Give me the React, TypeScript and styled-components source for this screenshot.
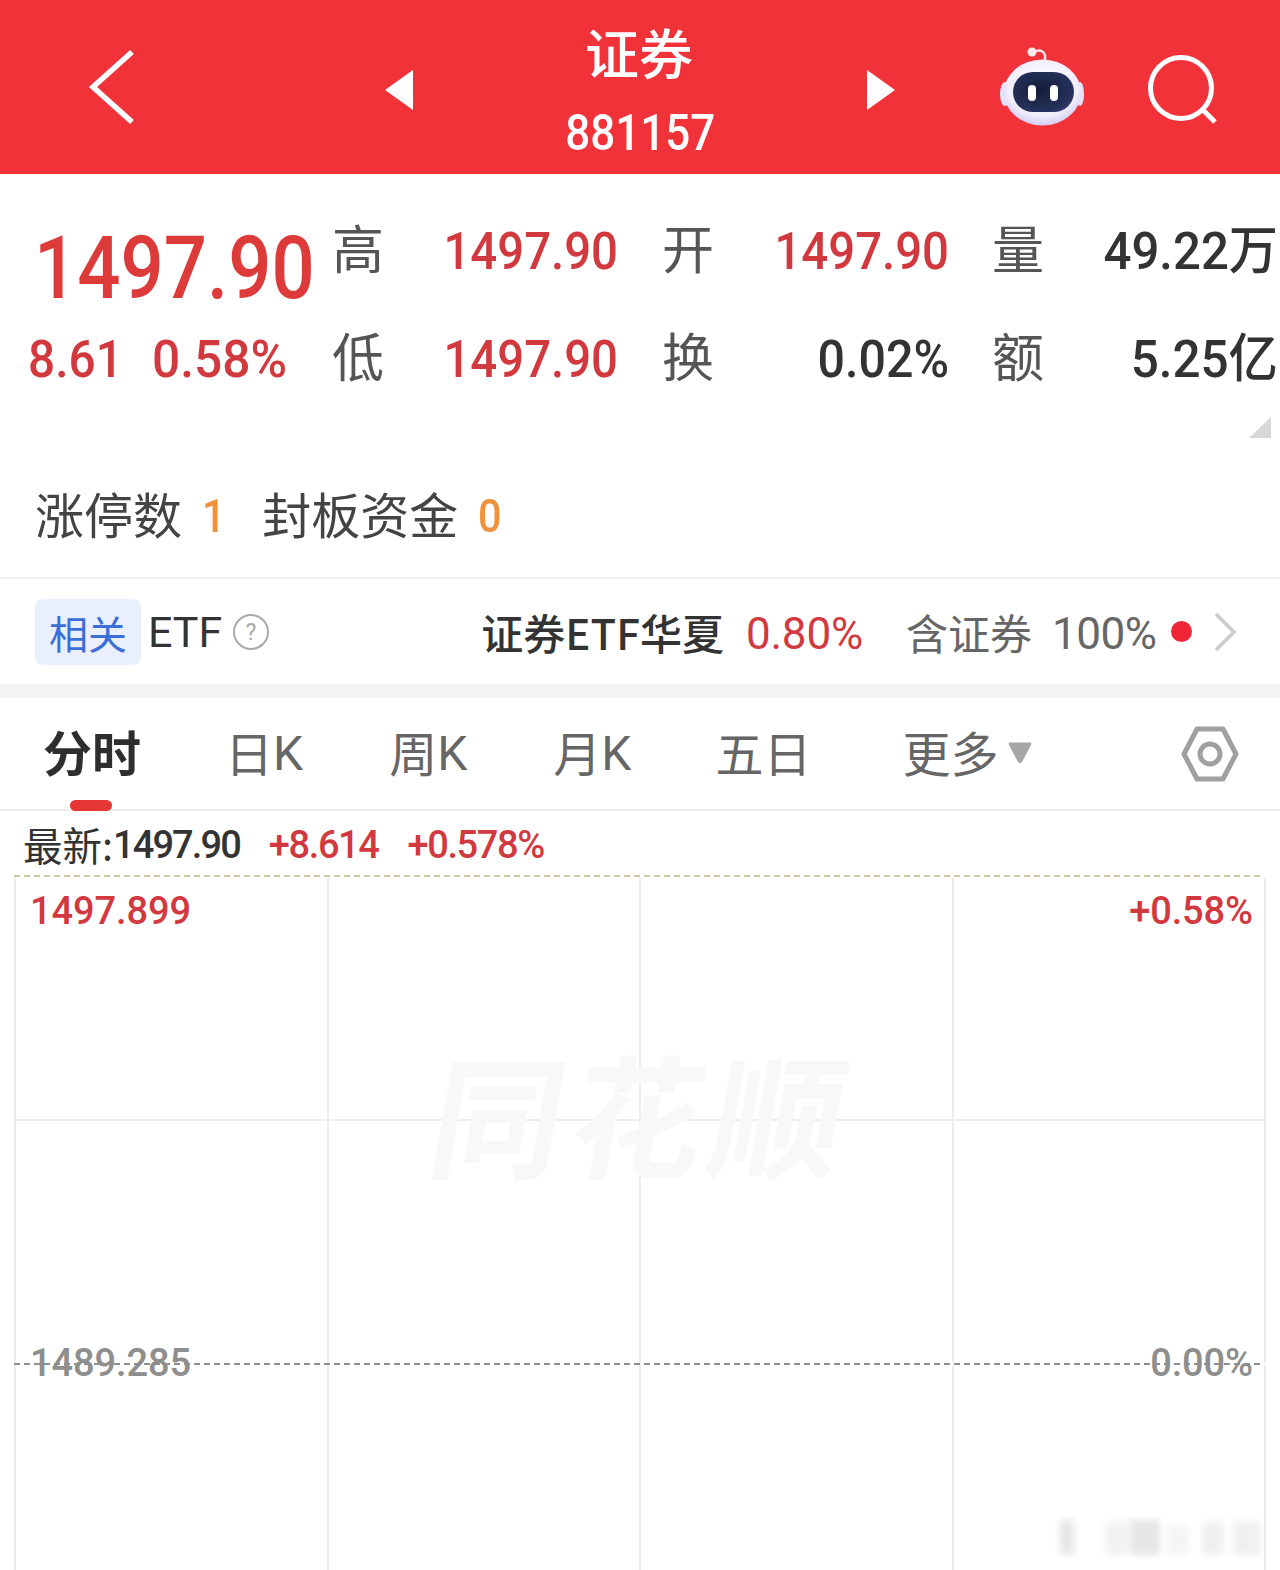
import * as React from 'react'
import styled, { createGlobalStyle } from 'styled-components'

const RED = '#d2393f';
const NUM_FONT = '"Roboto", "Noto Sans CJK SC", sans-serif';

const GlobalStyle = createGlobalStyle`
  html, body {
    margin: 0;
    padding: 0;
    background: #fff;
    font-family: "Noto Sans CJK SC", "Noto Sans", sans-serif;
  }
  * { box-sizing: border-box; }
`;

const Page = styled.div`
  position: relative;
  width: 1280px;
  height: 1570px;
  overflow: hidden;
  background: #fff;
  display: flex;
  flex-direction: column;
`;

const Header = styled.header`
  height: 174px;
  flex: none;
  background: #f13239;
  display: flex;
  align-items: center;
  padding-left: 88px;
`;

const TitleBlock = styled.div`
  width: 454px;
  padding-top: 15px;
  display: flex;
  flex-direction: column;
  align-items: center;
  color: #fff;
`;

const Title = styled.div`
  font-size: 54px;
  line-height: 62px;
  font-weight: 500;
  margin-top: -8px;
  margin-right: 2px;
`;

const Code = styled.div`
  font-family: ${NUM_FONT};
  font-size: 50px;
  line-height: 54px;
  font-weight: 500;
  margin-top: 23px;
  transform: scaleX(0.88);
`;

const HeaderIcon = styled.svg<{ $ml?: number; $mt?: number }>`
  flex: none;
  display: block;
  margin-left: ${(p) => p.$ml || 0}px;
  margin-top: ${(p) => p.$mt || 0}px;
`;

const Quote = styled.section`
  height: 405px;
  flex: none;
  position: relative;
  border-bottom: 2px solid #f0f0f0;
  padding-top: 21px;
`;

const QuoteGrid = styled.div`
  display: grid;
  grid-template-columns: 332px 50px 236px 44px 50px 237px 43px 50px 236px;
  grid-auto-rows: 108px;
  align-items: center;
`;

const BigPrice = styled.div`
  font-family: ${NUM_FONT};
  font-size: 87px;
  line-height: 108px;
  font-weight: 500;
  color: #dd3a3a;
  margin-left: 34px;
  white-space: nowrap;
  margin-top: 38px;
  transform: scaleX(0.875);
  transform-origin: left center;
`;

const ChangeRow = styled.div`
  display: flex;
  gap: 21px;
  padding-left: 28px;
  padding-top: 4px;
`;

const Change = styled.span<{ $sx: number }>`
  font-family: ${NUM_FONT};
  font-size: 52px;
  font-weight: 500;
  color: ${RED};
  display: inline-block;
  transform: scaleX(${(p) => p.$sx});
  transform-origin: left center;
`;

const Label = styled.div`
  font-size: 52px;
  line-height: 60px;
  color: #555;
  margin-top: -4px;
`;

const Value = styled.div<{ $dark?: boolean; $sx?: number }>`
  font-family: ${NUM_FONT};
  font-size: 52px;
  line-height: 60px;
  font-weight: 500;
  margin-top: 5px;
  text-align: right;
  white-space: nowrap;
  color: ${(p) => (p.$dark ? '#333' : RED)};
  transform: scaleX(${(p) => p.$sx || 0.91});
  transform-origin: right center;
`;

const CornerMark = styled.div`
  position: absolute;
  right: 9px;
  top: 243px;
  width: 0;
  height: 0;
  border-style: solid;
  border-width: 0 0 21px 22px;
  border-color: transparent transparent #d8d8d8 transparent;
`;

const LimitRow = styled.div`
  display: flex;
  align-items: center;
  padding-left: 35px;
  margin-top: 71px;
  height: 60px;
  font-size: 49px;
  color: #444;
`;

const LimitValue = styled.span<{ $ml: number; $mr: number }>`
  font-family: ${NUM_FONT};
  font-size: 46px;
  font-weight: 500;
  color: #f0923a;
  margin-top: 7px;
  margin-left: ${(p) => p.$ml}px;
  margin-right: ${(p) => p.$mr}px;
  transform: scaleX(0.9);
  transform-origin: left center;
`;

const EtfRow = styled.section`
  height: 105px;
  flex: none;
  display: flex;
  align-items: center;
  padding-left: 35px;
`;

const EtfBadge = styled.div`
  width: 106px;
  height: 66px;
  border-radius: 8px;
  background: #e9effc;
  color: #3b6ed8;
  font-size: 39px;
  display: flex;
  align-items: center;
  justify-content: center;
`;

const EtfName = styled.span`
  font-family: ${NUM_FONT};
  font-size: 43px;
  color: #333;
  margin-left: 7px;
`;

const HelpIcon = styled.svg`
  margin-left: 11px;
  flex: none;
`;

const FundName = styled.span`
  font-size: 42px;
  font-weight: 500;
  color: #333;
  margin-left: 212px;
  white-space: nowrap;
`;

const FundRate = styled.span`
  font-family: ${NUM_FONT};
  font-size: 44px;
  color: ${RED};
  margin-left: 22px;
  margin-top: 4px;
  letter-spacing: -0.2px;
`;

const HoldLabel = styled.span`
  font-size: 42px;
  color: #666;
  margin-left: 43px;
`;

const HoldValue = styled.span`
  font-family: ${NUM_FONT};
  font-size: 44px;
  color: #666;
  margin-left: 20px;
  margin-top: 4px;
  letter-spacing: -0.5px;
`;

const Dot = styled.span`
  width: 21px;
  height: 21px;
  border-radius: 50%;
  background: #f02535;
  margin-left: 15px;
  flex: none;
`;

const Band = styled.div`
  height: 14px;
  flex: none;
  background: #f5f5f5;
`;

const Tabs = styled.nav`
  height: 113px;
  flex: none;
  display: flex;
  align-items: center;
  border-bottom: 2px solid #ececec;
  padding-left: 43px;
  padding-bottom: 6px;
`;

const Tab = styled.div<{ $active?: boolean; $ml?: number }>`
  position: relative;
  height: 100%;
  display: flex;
  align-items: center;
  margin-left: ${(p) => p.$ml || 0}px;
  font-size: ${(p) => (p.$active ? 49 : 48)}px;
  font-weight: ${(p) => (p.$active ? 700 : 400)};
  color: ${(p) => (p.$active ? '#2e2e2e' : '#666')};
  white-space: nowrap;
`;

const TabLatin = styled.span`
  font-family: ${NUM_FONT};
  font-size: 48px;
  margin-top: 6px;
`;

const TabMark = styled.span`
  position: absolute;
  left: 27px;
  bottom: -8px;
  width: 42px;
  height: 11px;
  border-radius: 6px;
  background: #e53535;
`;

const MoreArrow = styled.svg`
  margin-left: 10px;
  margin-top: 4px;
  flex: none;
`;

const SettingIcon = styled.svg`
  margin-left: 149px;
  margin-top: 6px;
  flex: none;
`;

const InfoRow = styled.div`
  height: 64px;
  flex: none;
  display: flex;
  align-items: center;
  padding-left: 23px;
  font-size: 39.5px;
  color: #333;
`;

const InfoNumber = styled.span<{ $up?: boolean }>`
  font-family: ${NUM_FONT};
  font-weight: 500;
  font-size: 38px;
  margin-top: 4px;
  letter-spacing: ${(p) => (p.$up ? -1.4 : -1.9)}px;
  color: ${(p) => (p.$up ? RED : '#333')};
  margin-left: ${(p) => (p.$up ? 29 : 0)}px;
`;

const Chart = styled.div`
  position: relative;
  flex: 1;
  margin: 0 14px;
  display: flex;
  flex-direction: column;
`;

const DashLine = styled.div<{ $color: string }>`
  height: 2px;
  flex: none;
  margin-right: 2px;
  background: repeating-linear-gradient(90deg, ${(p) => p.$color} 0 6px, transparent 6px 10px);
`;

const ChartRow = styled.div<{ $h?: number }>`
  display: grid;
  grid-template-columns: repeat(4, 1fr);
  ${(p) => (p.$h ? `height: ${p.$h}px; flex: none;` : 'flex: 1;')}
  border-right: 2px solid #ededed;
`;

const ChartCell = styled.div`
  border-left: 2px solid #ededed;
`;

const SolidLine = styled.div`
  height: 2px;
  flex: none;
  background: #ededed;
`;

const AxisLabel = styled.span<{ $side: 'left' | 'right'; $top: number; $up?: boolean }>`
  position: absolute;
  ${(p) => p.$side}: ${(p) => (p.$side === 'left' ? 16 : 13)}px;
  top: ${(p) => p.$top}px;
  font-family: ${NUM_FONT};
  font-weight: 500;
  font-size: 38px;
  line-height: 46px;
  letter-spacing: -0.1px;
  color: ${(p) => (p.$up ? '#d2393f' : '#8e8e8e')};
`;

const Watermark = styled.div`
  position: absolute;
  left: 420px;
  top: 161px;
  font-size: 132px;
  line-height: 150px;
  font-weight: 700;
  color: #f8f8f8;
  letter-spacing: 8px;
  transform: skewX(-10deg);
  white-space: nowrap;
  pointer-events: none;
`;

const CornerSmudge = styled.svg`
  position: absolute;
  right: 15px;
  bottom: 0;
`;

const RobotIcon = () => (
  <HeaderIcon $ml={105} width="84" height="84" viewBox="0 0 84 84">
    <defs>
      <radialGradient id="shell" cx="50%" cy="40%" r="65%">
        <stop offset="0%" stopColor="#ffffff" />
        <stop offset="70%" stopColor="#f1eefc" />
        <stop offset="100%" stopColor="#c9c2f0" />
      </radialGradient>
      <radialGradient id="visor" cx="45%" cy="45%" r="65%">
        <stop offset="0%" stopColor="#141d38" />
        <stop offset="80%" stopColor="#25315a" />
        <stop offset="100%" stopColor="#3d3f80" />
      </radialGradient>
    </defs>
    <path d="M34 7 C42 3 46 8 45 15" fill="none" stroke="#f6e6ea" strokeWidth="2.5" />
    <circle cx="32" cy="7" r="4.5" fill="#f8e8ea" />
    <ellipse cx="5" cy="49" rx="5" ry="12" fill="#e6e1f8" />
    <ellipse cx="80" cy="49" rx="4" ry="12" fill="#e6e1f8" />
    <ellipse cx="42.5" cy="47.5" rx="38.5" ry="33" fill="url(#shell)" />
    <rect x="13" y="27" width="61" height="40" rx="20" fill="url(#visor)" />
    <rect x="28" y="40" width="8" height="16" rx="4" fill="#fff" />
    <rect x="50" y="40" width="8" height="16" rx="4" fill="#fff" />
  </HeaderIcon>
);

const App: React.FC = () => {
  return (
    <Page>
      <GlobalStyle />
      <Header>
        <HeaderIcon width="48" height="76" viewBox="0 0 48 76">
          <path d="M44 3 L5 38 L44 73" fill="none" stroke="#fff" strokeWidth="5.5" />
        </HeaderIcon>
        <HeaderIcon $ml={249} $mt={6} width="28" height="40" viewBox="0 0 28 40">
          <polygon points="28,0 28,40 0,20" fill="#fff" />
        </HeaderIcon>
        <TitleBlock>
          <Title>证券</Title>
          <Code>881157</Code>
        </TitleBlock>
        <HeaderIcon $mt={6} width="28" height="40" viewBox="0 0 28 40">
          <polygon points="0,0 0,40 28,20" fill="#fff" />
        </HeaderIcon>
        <RobotIcon />
        <HeaderIcon $ml={62} $mt={5} width="72" height="72" viewBox="0 0 72 72">
          <circle cx="35" cy="34" r="30.5" fill="none" stroke="#fff" strokeWidth="5" />
          <path d="M57 56 L69 68" stroke="#fff" strokeWidth="5" />
        </HeaderIcon>
      </Header>

      <Quote>
        <QuoteGrid>
          <BigPrice>1497.90</BigPrice>
          <Label>高</Label>
          <Value>1497.90</Value>
          <span />
          <Label>开</Label>
          <Value>1497.90</Value>
          <span />
          <Label>量</Label>
          <Value $dark $sx={0.945}>49.22万</Value>
          <ChangeRow>
            <Change $sx={0.92}>8.61</Change>
            <Change $sx={0.955}>0.58%</Change>
          </ChangeRow>
          <Label>低</Label>
          <Value>1497.90</Value>
          <span />
          <Label>换</Label>
          <Value $dark $sx={0.93}>0.02%</Value>
          <span />
          <Label>额</Label>
          <Value $dark $sx={0.95}>5.25亿</Value>
        </QuoteGrid>
        <CornerMark />
        <LimitRow>
          涨停数
          <LimitValue $ml={20} $mr={34}>1</LimitValue>
          封板资金
          <LimitValue $ml={20} $mr={0}>0</LimitValue>
        </LimitRow>
      </Quote>

      <EtfRow>
        <EtfBadge>相关</EtfBadge>
        <EtfName>ETF</EtfName>
        <HelpIcon width="36" height="36" viewBox="0 0 36 36">
          <circle cx="18" cy="18" r="17" fill="none" stroke="#aaa" strokeWidth="2" />
          <text x="18" y="26" fontSize="23" textAnchor="middle" fill="#aaa" fontFamily="Roboto, sans-serif">?</text>
        </HelpIcon>
        <FundName>证券ETF华夏</FundName>
        <FundRate>0.80%</FundRate>
        <HoldLabel>含证券</HoldLabel>
        <HoldValue>100%</HoldValue>
        <Dot />
        <HeaderIcon $ml={21} width="24" height="40" viewBox="0 0 24 40">
          <path d="M3 2 L21 20 L3 38" fill="none" stroke="#ccc" strokeWidth="3.5" />
        </HeaderIcon>
      </EtfRow>

      <Band />

      <Tabs>
        <Tab $active>分时<TabMark /></Tab>
        <Tab $ml={84}>日<TabLatin>K</TabLatin></Tab>
        <Tab $ml={86}>周<TabLatin>K</TabLatin></Tab>
        <Tab $ml={86}>月<TabLatin>K</TabLatin></Tab>
        <Tab $ml={84}>五日</Tab>
        <Tab $ml={91}>更多</Tab>
        <MoreArrow width="24" height="22" viewBox="0 0 24 22">
          <path d="M2 0.5 H22 Q24 0.5 23 3 L14 20 Q12 22 10 20 L1 3 Q0 0.5 2 0.5 Z" fill="#a6a6a6" />
        </MoreArrow>
        <SettingIcon width="58" height="56" viewBox="0 0 58 56">
          <path d="M16 3 H42 L55 28 L42 53 H16 L3 28 Z" fill="none" stroke="#a0a0a0" strokeWidth="5" strokeLinejoin="round" />
          <circle cx="29" cy="28" r="10" fill="none" stroke="#a0a0a0" strokeWidth="5" />
        </SettingIcon>
      </Tabs>

      <InfoRow>
        最新:<InfoNumber>1497.90</InfoNumber>
        <InfoNumber $up>+8.614</InfoNumber>
        <InfoNumber $up>+0.578%</InfoNumber>
      </InfoRow>

      <Chart>
        <DashLine $color="#cfc8a6" />
        <ChartRow $h={242}>
          <ChartCell /><ChartCell /><ChartCell /><ChartCell />
        </ChartRow>
        <SolidLine />
        <ChartRow $h={242}>
          <ChartCell /><ChartCell /><ChartCell /><ChartCell />
        </ChartRow>
        <DashLine $color="#8f8f8f" />
        <ChartRow>
          <ChartCell /><ChartCell /><ChartCell /><ChartCell />
        </ChartRow>
        <AxisLabel $side="left" $top={13} $up>1497.899</AxisLabel>
        <AxisLabel $side="right" $top={13} $up>+0.58%</AxisLabel>
        <Watermark>同花顺</Watermark>
        <AxisLabel $side="left" $top={465}>1489.285</AxisLabel>
        <AxisLabel $side="right" $top={465}>0.00%</AxisLabel>
      </Chart>
      <CornerSmudge width="215" height="70" viewBox="0 0 215 70">
        <defs>
          <filter id="soft"><feGaussianBlur stdDeviation="3.5" /></filter>
        </defs>
        <g filter="url(#soft)" fill="#e6e6e6">
          <rect x="10" y="20" width="14" height="35" />
          <rect x="55" y="22" width="22" height="33" opacity="0.5" />
          <rect x="80" y="20" width="30" height="35" />
          <rect x="117" y="24" width="22" height="31" opacity="0.4" />
          <rect x="152" y="22" width="22" height="33" opacity="0.6" />
          <rect x="183" y="22" width="28" height="33" opacity="0.6" />
        </g>
      </CornerSmudge>
    </Page>
  )
}

export default App
